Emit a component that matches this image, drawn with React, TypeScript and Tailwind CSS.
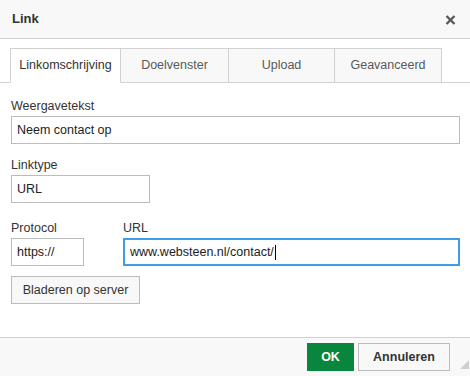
import React from 'react';

const tabs = [
  { label: 'Linkomschrijving', w: 'w-[111px] border-l', active: true },
  { label: 'Doelvenster', w: 'w-[108px]', active: false },
  { label: 'Upload', w: 'w-[106px]', active: false },
  { label: 'Geavanceerd', w: 'w-[107px]', active: false },
];

function Label({ children }: { children: React.ReactNode }) {
  return <div className="text-[12.5px] leading-[16px] text-[#333] mb-[2px]">{children}</div>;
}

function TextBox({ value, className = '' }: { value: string; className?: string }) {
  return (
    <div
      className={`h-[28px] flex items-center pl-[5px] pt-[1px] border border-[#bcbcbc] bg-white text-[12.5px] text-[#222] ${className}`}
    >
      {value}
    </div>
  );
}

export default function App() {
  return (
    <div
      className="w-[470px] h-[376px] flex flex-col bg-white overflow-hidden"
      style={{ fontFamily: '"Liberation Sans", Arial, sans-serif' }}
    >
      {/* Title bar */}
      <div className="h-[39px] shrink-0 flex items-center justify-between pl-[12px] pr-[14px] bg-[#f8f8f8] border-b border-[#d1d1d1]">
        <span className="text-[13px] font-bold text-[#333]">Link</span>
        <svg width="11" height="10" viewBox="0 0 11 10" className="mt-[2px]">
          <path d="M1.5 1 L9.5 9 M9.5 1 L1.5 9" stroke="#5a5a5a" strokeWidth="2.4" strokeLinecap="butt" />
        </svg>
      </div>

      {/* Tabs */}
      <div className="mt-[9px] h-[35px] shrink-0 flex items-start pl-[10px] border-b border-[#d1d1d1]">
        {tabs.map((t) => (
          <div
            key={t.label}
            className={`${t.w} h-[35px] -mb-px flex items-center justify-center border-t border-r border-b border-[#d1d1d1] text-[12.5px] ${
              t.active ? 'bg-white border-b-white text-[#333]' : 'bg-[#f8f8f8] text-[#595959]'
            }`}
          >
            {t.label}
          </div>
        ))}
      </div>

      {/* Form */}
      <div className="flex flex-col pl-[11px] pr-[10px] pt-[15px]">
        <Label>Weergavetekst</Label>
        <TextBox value="Neem contact op" />

        <div className="mt-[13px]">
          <Label>Linktype</Label>
          <TextBox value="URL" className="w-[139px]" />
        </div>

        <div className="mt-[17px] flex gap-[39px]">
          <div className="w-[73px]">
            <Label>Protocol</Label>
            <TextBox value="https://" />
          </div>
          <div className="flex-1">
            <Label>URL</Label>
            <div className="h-[28px] flex items-center pl-[5px] pt-[1px] border-2 border-[#3f9de8] bg-white text-[12.5px] text-[#222]">
              <span>www.websteen.nl/contact/</span>
              <span className="w-px h-[15px] bg-black ml-px" />
            </div>
          </div>
        </div>

        <div className="mt-[10px]">
          <button className="w-[129px] h-[28px] border border-[#bcbcbc] bg-[#f8f8f8] text-[12.5px] text-[#333]">
            Bladeren op server
          </button>
        </div>
      </div>

      {/* Footer */}
      <div className="mt-auto h-[39px] shrink-0 flex items-start justify-end pt-[5px] pr-[1px] bg-[#f8f8f8] border-t border-[#d1d1d1]">
        <button className="w-[47px] h-[28px] bg-[#09863e] text-white text-[12.5px] font-bold">OK</button>
        <button className="ml-[4px] w-[92px] h-[28px] border border-[#bcbcbc] bg-[#f8f8f8] text-[12.5px] font-bold text-[#333]">
          Annuleren
        </button>
        <svg width="9" height="9" viewBox="0 0 9 9" className="ml-[10px] self-end mb-[7px]">
          <polygon points="9,0 9,9 0,9" fill="#cfcfcf" />
        </svg>
      </div>
    </div>
  );
}
